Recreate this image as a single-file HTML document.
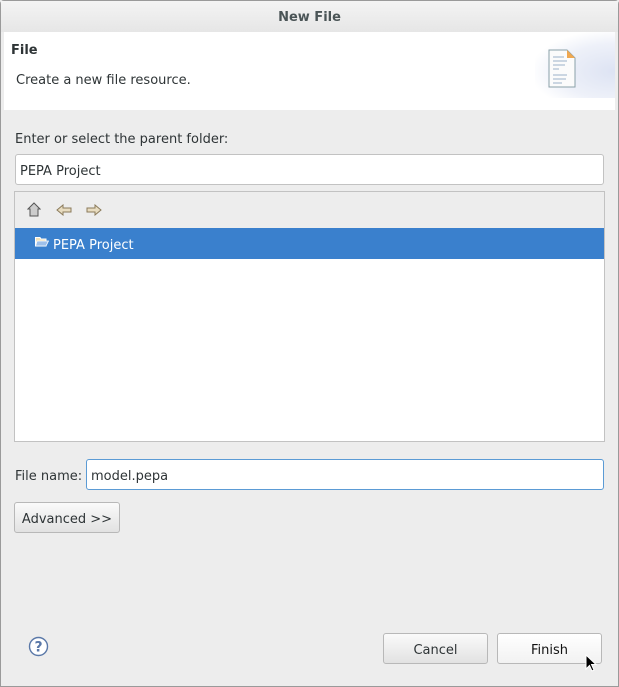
<!DOCTYPE html>
<html><head><style>
*{box-sizing:border-box;margin:0;padding:0}
body{width:619px;height:687px;background:#ededed;font-family:"DejaVu Sans","Liberation Sans",sans-serif;font-size:13px;color:#2e3436;position:relative;overflow:hidden}
.a{position:absolute}
.win{left:0;top:0;width:619px;height:687px;border:1px solid #9a9a9a;border-radius:4px 4px 0 0}
.title{left:1px;top:1px;width:617px;height:31px;background:linear-gradient(#f4f4f4,#e6e6e6);text-align:center;line-height:34px;font-weight:bold;color:#4b5557;font-size:13px}
.hdr{left:4px;top:32px;width:611px;height:78px;background:#fff}
.inp{background:#fff;border:1px solid #c2c2c2;border-radius:3px;padding-left:4px}
.btn{background:linear-gradient(#fafafa,#e2e2e2);border:1px solid #b8b8b8;border-radius:3px;text-align:center;line-height:33px;color:#2e3436}
</style></head><body>
<div class="a win"></div>
<div class="a title">New File</div>
<div class="a hdr">
  <div class="a" style="right:0;top:0;width:80px;height:66px;background:radial-gradient(ellipse at 100% 60%,#dde3f3 0%,#eef1f9 50%,#fff 75%)"></div>
  <div class="a" style="left:7px;top:11px;font-size:13px;font-weight:bold;color:#2e3436">File</div>
  <div class="a" style="left:12px;top:41px">Create a new file resource.</div>
  <svg class="a" style="left:543px;top:14px" width="30" height="42" viewBox="0 0 30 42">
    <path d="M2 4 H20 L28 12 V41 H2 Z" fill="#fbfbfb" stroke="#8aa0a8"/>
    <path d="M20 4 L28 12 H20 Z" fill="#f0a850"/>
    <g stroke="#9bb0c8" stroke-width="1"><line x1="6" y1="11" x2="17" y2="11"/><line x1="6" y1="15" x2="20" y2="15"/><line x1="6" y1="19" x2="18" y2="19"/><line x1="6" y1="23" x2="12" y2="23"/><line x1="6" y1="29" x2="20" y2="29"/><line x1="6" y1="33" x2="19" y2="33"/><line x1="6" y1="37" x2="15" y2="37"/></g>
  </svg>
</div>
<div class="a" style="left:15px;top:132px">Enter or select the parent folder:</div>
<div class="a inp" style="left:15px;top:154px;width:589px;height:31px;line-height:34px">PEPA Project</div>
<div class="a" style="left:14px;top:191px;width:591px;height:251px;border:1px solid #c2c2c2;background:#fff">
  <div class="a" style="left:0;top:0;width:589px;height:36px;background:#ededed"></div>
  <svg class="a" style="left:12px;top:10px" width="14" height="15" viewBox="0 0 14 15"><path d="M7 1 L13 7 H11 V14 H3 V7 H1 Z" fill="#ccc" stroke="#555" stroke-width="1"/></svg>
  <svg class="a" style="left:41px;top:12px" width="16" height="12" viewBox="0 0 16 12"><path d="M1 6 L7 1 V4 H15 V8 H7 V11 Z" fill="#e8dcc0" stroke="#8a7a5a"/></svg>
  <svg class="a" style="left:71px;top:12px" width="16" height="12" viewBox="0 0 16 12"><path d="M15 6 L9 1 V4 H1 V8 H9 V11 Z" fill="#e8dcc0" stroke="#8a7a5a"/></svg>
  <div class="a" style="left:0;top:36px;width:589px;height:31px;background:#3a80cd;color:#fff;line-height:35px;padding-left:38px">PEPA Project</div>
  <svg class="a" style="left:20px;top:44px" width="14" height="11" viewBox="0 0 14 11"><path d="M0.5 1.5 H5 L6 3 H11 V10 H0.5 Z" fill="#f3e2b8" stroke="#fff"/><path d="M2 5 H13.5 L11 10 H0.5 Z" fill="#9ec0ea" stroke="#fff" stroke-width=".8"/></svg>
</div>
<div class="a" style="left:15px;top:469px">File name:</div>
<div class="a inp" style="left:86px;top:459px;width:518px;height:31px;line-height:33px;border-color:#5b9bd5">model.pepa</div>
<div class="a btn" style="left:14px;top:502px;width:106px;height:31px">Advanced &gt;&gt;</div>
<svg class="a" style="left:28px;top:636px" width="21" height="21" viewBox="0 0 21 21"><circle cx="10.5" cy="10.5" r="9" fill="#fff" stroke="#5a78a8" stroke-width="1.4"/><text x="10.5" y="15.5" text-anchor="middle" font-family="DejaVu Sans" font-size="14" font-weight="bold" fill="#5a78a8">?</text></svg>
<div class="a btn" style="left:383px;top:633px;width:105px;height:31px">Cancel</div>
<div class="a btn" style="left:497px;top:633px;width:105px;height:31px;background:linear-gradient(#fff,#f2f2f2);color:#111">Finish</div>
<svg class="a" style="left:585px;top:654px" width="12" height="20" viewBox="0 0 12 20"><path d="M1 1 V15 L4.5 11.5 L7 17 L9 16 L6.5 10.5 H11 Z" fill="#000" stroke="#fff" stroke-width="1"/></svg>
</body></html>
